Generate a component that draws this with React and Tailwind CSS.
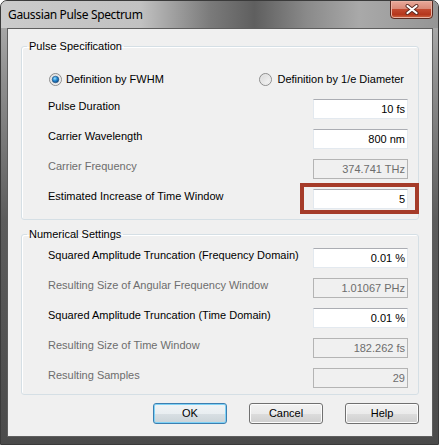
import React from "react";

function Radio({ checked }) {
  return (
    <svg width="13" height="13" viewBox="0 0 13 13" className="shrink-0">
      <defs>
        <linearGradient id={checked ? "rgA" : "rgB"} x1="0" y1="0" x2="1" y2="1">
          <stop offset="0" stopColor="#d4d4d4" />
          <stop offset="1" stopColor="#fbfbfb" />
        </linearGradient>
        <radialGradient id="dotG" cx="0.4" cy="0.35" r="0.7">
          <stop offset="0" stopColor="#9fe2ff" />
          <stop offset="0.45" stopColor="#2a8fd6" />
          <stop offset="1" stopColor="#0b3f78" />
        </radialGradient>
      </defs>
      <circle cx="6.5" cy="6.5" r="6" fill={`url(#${checked ? "rgA" : "rgB"})`} stroke="#8d8d8d" strokeWidth="1" />
      <circle cx="6.5" cy="6.5" r="4.6" fill="none" stroke="#e6e6e6" strokeWidth="1" />
      {checked && <circle cx="6.5" cy="6.5" r="3.3" fill="url(#dotG)" stroke="#1e4f80" strokeWidth="0.6" />}
    </svg>
  );
}

function Field({ value, disabled }) {
  return (
    <div
      className={
        disabled
          ? "w-[95px] h-[20px] border border-[#b4b4b4] bg-[#f0f0f0] text-[#6d6d6d] text-right pr-[2px] leading-[19px]"
          : "w-[95px] h-[20px] border border-[#e3e9ef] border-t-[#abadb3] bg-white text-black text-right pr-[2px] leading-[19px]"
      }
    >
      {value}
    </div>
  );
}

function Row({ label, value, disabled, highlight }) {
  return (
    <div className="flex h-[20px] items-start justify-between pl-[26px] pr-[10px]">
      <div className={disabled ? "pt-[1px] leading-[13px] text-[#6d6d6d]" : "pt-[1px] leading-[13px] text-black"}>{label}</div>
      <div className="relative">
        <Field value={value} disabled={disabled} />
        {highlight && (
          <div className="absolute left-[-13px] right-[-11px] top-[-6px] bottom-[-5px] border-4 border-[#a53b29]" />
        )}
      </div>
    </div>
  );
}

function Button({ children, primary }) {
  return (
    <div
      className={
        primary
          ? "w-[74px] h-[21px] rounded-[3px] border border-[#3c7fb1] bg-[linear-gradient(180deg,#f0f4f6_0%,#e9eef1_50%,#d9e0e4_50%,#cbd3d8_100%)] shadow-[inset_0_0_0_1px_#7fd2f6] flex items-center justify-center text-black"
          : "w-[74px] h-[21px] rounded-[3px] border border-[#707070] bg-[linear-gradient(180deg,#f2f2f2_0%,#ebebeb_50%,#dddddd_50%,#cfcfcf_100%)] shadow-[inset_0_0_0_1px_#fcfcfc] flex items-center justify-center text-black"
      }
    >
      {children}
    </div>
  );
}

export default function App() {
  return (
    <div className="w-[439px] h-[445px] flex flex-col overflow-hidden rounded-t-[7px] border border-[#3a3a3a] bg-[linear-gradient(180deg,#b4b4b4_0px,#8e8e8e_80px,#5c5c5c_220px,#4a4a4a_100%)] font-['Liberation_Sans',Arial,sans-serif] text-[11px]">
      <div className="relative h-[27px] shrink-0 bg-[linear-gradient(90deg,#cbcbcb_0%,#c1c1c1_32%,#7a7a7a_48%,#5f5f5f_58%,#8a8a8a_70%,#a9a9a9_82%,#959595_100%)]">
        <div className="pl-[7px] pt-[6px] text-[12px] leading-[16px] text-black font-['Noto_Sans',sans-serif] tracking-[-0.35px]">
          Gaussian Pulse Spectrum
        </div>
        <div className="absolute right-[5px] top-[-1px] w-[43px] h-[19px] rounded-b-[4px] border border-[#5b2a20] bg-[linear-gradient(180deg,#e9a99a_0%,#d98a78_45%,#c2492f_50%,#b5361c_80%,#cf6a44_100%)] shadow-[inset_0_0_0_1px_#eab3a4] flex items-center justify-center">
          <svg width="14" height="11" viewBox="0 0 14 11">
            <path d="M2.5 2 L11.5 9 M11.5 2 L2.5 9" stroke="#5a2a22" strokeWidth="4" strokeLinecap="round" />
            <path d="M2.5 2 L11.5 9 M11.5 2 L2.5 9" stroke="#ffffff" strokeWidth="2.2" strokeLinecap="round" />
          </svg>
        </div>
      </div>

      <div className="ml-[6px] mr-[5px] mb-[7px] flex-1 flex flex-col border border-[#5e5e5e] bg-[#f0f0f0]">
        <fieldset className="mx-[13px] mt-[11px] rounded-[3px] border border-[#d5dfe5] shadow-[inset_1px_1px_0_#ffffff]">
          <legend className="ml-[5px] px-[2px] leading-[13px] text-black">Pulse Specification</legend>
          <div className="pt-[20px] pb-[10px] flex flex-col">
            <div className="flex h-[13px] items-center justify-between pl-[27px] pr-[14px]">
              <div className="flex items-center gap-[4px] leading-[13px]">
                <Radio checked />
                <span>Definition by FWHM</span>
              </div>
              <div className="flex items-center gap-[5px] leading-[13px]">
                <Radio />
                <span>Definition by 1/e Diameter</span>
              </div>
            </div>
            <div className="mt-[13px] flex flex-col gap-[10px]">
              <Row label="Pulse Duration" value="10 fs" />
              <Row label="Carrier Wavelength" value="800 nm" />
              <Row label="Carrier Frequency" value="374.741 THz" disabled />
              <Row label="Estimated Increase of Time Window" value="5" highlight />
            </div>
          </div>
        </fieldset>

        <fieldset className="mx-[13px] mt-[8px] rounded-[3px] border border-[#d5dfe5] shadow-[inset_1px_1px_0_#ffffff]">
          <legend className="ml-[5px] px-[2px] leading-[13px] text-black">Numerical Settings</legend>
          <div className="pt-[7px] pb-[6px] flex flex-col gap-[10px]">
            <Row label="Squared Amplitude Truncation (Frequency Domain)" value="0.01 %" />
            <Row label="Resulting Size of Angular Frequency Window" value="1.01067 PHz" disabled />
            <Row label="Squared Amplitude Truncation (Time Domain)" value="0.01 %" />
            <Row label="Resulting Size of Time Window" value="182.262 fs" disabled />
            <Row label="Resulting Samples" value="29" disabled />
          </div>
        </fieldset>

        <div className="mt-[8px] mr-[13px] flex justify-end gap-[22px]">
          <Button primary>OK</Button>
          <Button>Cancel</Button>
          <Button>Help</Button>
        </div>
      </div>
    </div>
  );
}
